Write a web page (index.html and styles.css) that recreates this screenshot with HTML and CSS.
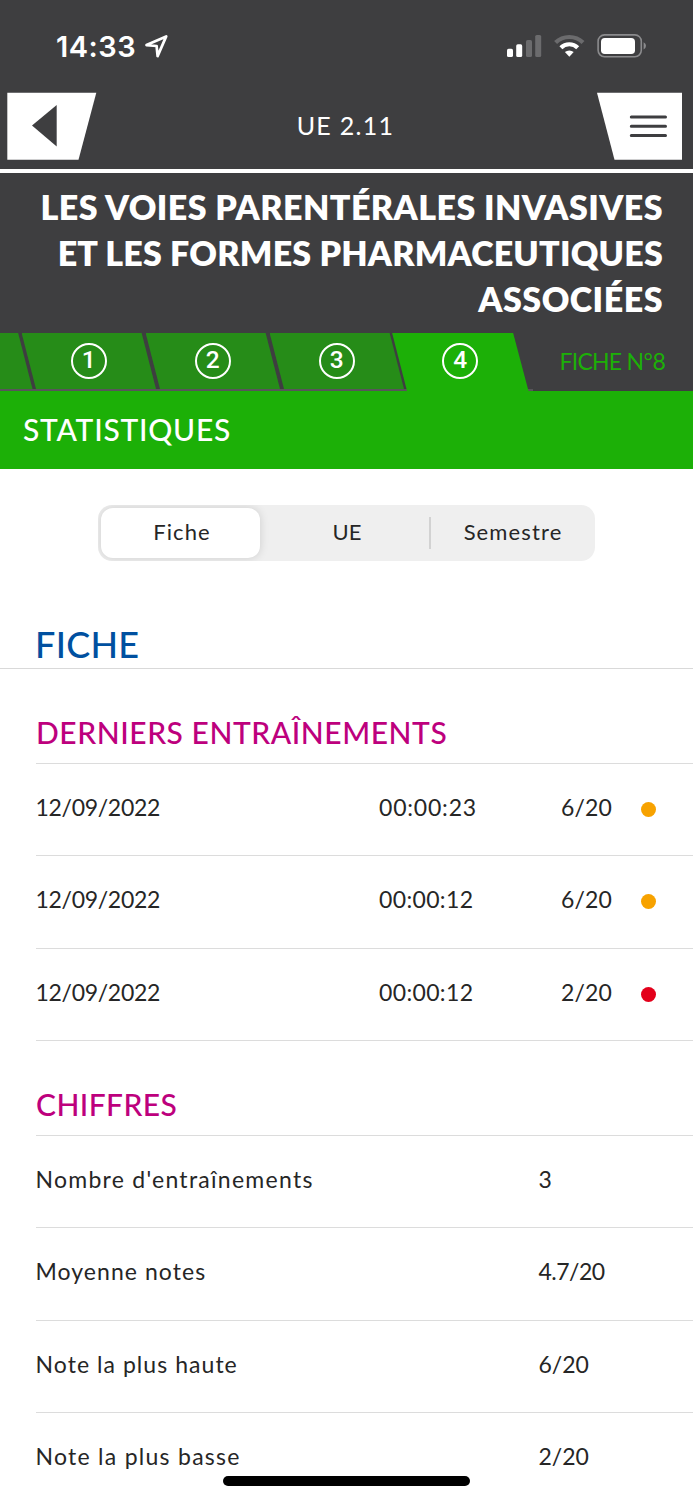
FILE: index.html
```html
<!DOCTYPE html>
<html lang="fr">
<head>
<meta charset="utf-8">
<title>Statistiques</title>
<link rel="stylesheet" href="styles.css">
</head>
<body>
<div class="screen">
  <header class="header">
    <div class="status">
      <span class="clock">14:33</span>
      <svg class="location" width="26" height="26" viewBox="0 0 26 26"><path d="M2.5 13.1 22.2 4.4 13.6 24.1 12.6 14Z" fill="none" stroke="#fff" stroke-width="2.7" stroke-linejoin="round"/></svg>
      <svg class="indicators" width="142" height="28" viewBox="0 0 142 28">
        <g fill="#fff"><rect x="1" y="16.7" width="6" height="8.3" rx="1.6"/><rect x="10.2" y="12.3" width="6" height="12.7" rx="1.6"/></g>
        <g fill="#6b6b6d"><rect x="20" y="8" width="6" height="17" rx="1.6"/><rect x="29.2" y="3" width="6" height="22" rx="1.6"/></g>
        <path d="M49.6 10.6A19.5 19.5 0 0 1 77 10.6" fill="none" stroke="#6b6b6d" stroke-width="4.2"/>
        <path d="M54.9 15.7A12 12 0 0 1 71.7 15.7" fill="none" stroke="#fff" stroke-width="4.2"/>
        <path d="M58.9 20A6.8 6.8 0 0 1 67.7 20L63.3 24.8Z" fill="#fff"/>
        <rect x="92.1" y="2.9" width="43.2" height="21.8" rx="6.4" fill="none" stroke="#8b8b8d" stroke-width="1.6"/>
        <rect x="95" y="6" width="34" height="16" rx="3.8" fill="#fff"/>
        <path d="M137.6 10.2Q140 11.2 140 13.8T137.6 17.4Z" fill="#8b8b8d"/>
      </svg>
    </div>
    <nav class="navbar">
      <svg class="back" width="90" height="68" viewBox="0 0 90 68"><path d="M.3.7H89.3L71.5 67.7H.3Z" fill="#fff"/><path d="M49.7 13V54.5L25 33.5Z" fill="#3e3e40"/></svg>
      <span class="course">UE 2.11</span>
      <svg class="menu" width="86" height="68" viewBox="0 0 86 68"><path d="M0 .7H85V67.7H17.5Z" fill="#fff"/><path d="M34.3 25H68.5M34.3 34.3H68.5M34.3 43.6H68.5" stroke="#3e3e40" stroke-width="3" stroke-linecap="round"/></svg>
    </nav>
    <h1 class="title"><span class="line-one">LES VOIES PARENTÉRALES INVASIVES</span><span class="line-two">ET LES FORMES PHARMACEUTIQUES</span><span>ASSOCIÉES</span></h1>
    <div class="tabs">
      <span class="tab-start"></span>
      <span class="tab"><b class="number">1</b></span>
      <span class="tab"><b class="number">2</b></span>
      <span class="tab"><b class="number">3</b></span>
      <span class="tab active"><b class="number">4</b></span>
      <span class="sheet">FICHE N<span class="degree">°</span>8</span>
    </div>
  </header>
  <h2 class="banner">STATISTIQUES</h2>
  <main>
    <div class="segments">
      <span class="segment selected">Fiche</span>
      <span class="segment unit">UE</span>
      <span class="segment last">Semestre</span>
    </div>
    <h2 class="section">FICHE</h2>
    <h3 class="group">DERNIERS ENTRAÎNEMENTS</h3>
    <div class="row"><span class="date">12/09/2022</span><span class="time">00:00:23</span><span class="score">6/20</span><i class="dot"></i></div>
    <div class="row"><span class="date">12/09/2022</span><span class="time early">00:00:12</span><span class="score">6/20</span><i class="dot"></i></div>
    <div class="row"><span class="date">12/09/2022</span><span class="time early">00:00:12</span><span class="score">2/20</span><i class="dot red"></i></div>
    <h3 class="group figures">CHIFFRES</h3>
    <div class="row"><span class="label">Nombre d'entraînements</span><span class="value">3</span></div>
    <div class="row"><span class="label compact">Moyenne notes</span><span class="value average">4.7/20</span></div>
    <div class="row"><span class="label compact">Note la plus haute</span><span class="value">6/20</span></div>
    <div class="row"><span class="label">Note la plus basse</span><span class="value">2/20</span></div>
  </main>
  <div class="home-indicator"></div>
</div>
</body>
</html>
```
FILE: styles.css
```css
* { box-sizing: border-box; }
body { margin: 0; background: #fff; }
h1, h2, h3 { margin: 0; }
.screen {
  position: relative;
  width: 693px;
  height: 1500px;
  overflow: hidden;
  font-family: Lato, sans-serif;
  color: #262626;
}
svg { display: block; }

.header { height: 391px; background: #3e3e40; color: #fff; }
.status { display: flex; height: 92px; padding: 32px 45px 0 56px; align-items: flex-start; }
.clock { width: 86px; font: 600 29px/29px Inter, sans-serif; letter-spacing: .5px; }
.location { margin-left: 1.5px; }
.indicators { margin-left: auto; }
.navbar {
  display: flex;
  height: 81px;
  padding: 0 10px 0 7px;
  justify-content: space-between;
  border-bottom: 4px solid #fff;
}
.course { padding: 18px 3px 0 0; font-size: 25px; line-height: 30px; letter-spacing: 1.3px; }
.title {
  display: flex;
  height: 159.5px;
  padding: 11px 30px 0 0;
  flex-direction: column;
  align-items: flex-end;
  font-size: 34px;
  font-weight: 800;
  line-height: 46px;
  letter-spacing: .5px;
}
.line-one { letter-spacing: .43px; }
.line-two { letter-spacing: .2px; }
.tabs {
  display: flex;
  height: 58.5px;
  background: linear-gradient(#58555a, #58555a) 0 100% / 533px 2px no-repeat;
}
.tab-start {
  width: 32.5px;
  height: 56.5px;
  margin-right: -11px;
  background: #268c18;
  clip-path: polygon(0 0, 18px 0, 100% 100%, 0 100%);
}
.tab {
  display: flex;
  width: 134.5px;
  height: 56.5px;
  margin-right: -10.5px;
  padding-top: 10.5px;
  justify-content: center;
  background: #268c18;
  clip-path: polygon(0 0, 120px 0, 100% 100%, 14.5px 100%);
}
.tab.active {
  width: 136.5px;
  height: 58.5px;
  margin: 0 0 0 -1.5px;
  background: #1cb007;
  clip-path: polygon(0 0, 121px 0, 100% 100%, 15px 100%);
}
.number {
  width: 36px;
  height: 36px;
  border: 2px solid #fff;
  border-radius: 50%;
  font: 500 24.5px/30px Roboto, sans-serif;
  text-align: center;
}
.sheet { padding: 14px 0 0 31px; color: #1cb007; font-size: 23px; line-height: 28px; letter-spacing: -.75px; white-space: nowrap; }
.degree { font-family: "Open Sans", sans-serif; font-size: 23px; }
.banner {
  height: 78px;
  padding: 20px 0 0 23px;
  background: #1cb007;
  color: #fff;
  font-size: 30px;
  font-weight: 500;
  line-height: 36px;
  letter-spacing: .75px;
}

.segments {
  display: flex;
  width: 497px;
  height: 56px;
  margin: 36px 0 0 98px;
  padding: 3px 0 3px 3px;
  overflow: hidden;
  border-radius: 14px;
  background: #efefef;
}
.segment { flex: 1; padding: 11px 0 0; font-size: 22px; line-height: 26px; letter-spacing: 1.12px; text-align: center; }
.selected { flex: 0 0 159px; padding-left: 3px; border-radius: 12px; background: #fff; box-shadow: 0 0 10px rgba(0, 0, 0, .14); }
.unit { flex: 0 0 171px; padding-left: 3px; letter-spacing: 0; background: linear-gradient(#d2d2d2, #d2d2d2) 100% 9px / 2px 32px no-repeat; }

.section {
  height: 108px;
  padding: 61px 0 0 35px;
  border-bottom: 1px solid #d9d9d9;
  color: #0050a0;
  font-size: 36px;
  font-weight: 500;
  line-height: 44px;
  letter-spacing: .3px;
}
.group {
  height: 95px;
  margin-left: 36px;
  padding-top: 44px;
  border-bottom: 1px solid #dcdcdc;
  color: #bd007d;
  font-size: 30px;
  font-weight: 500;
  line-height: 38px;
  letter-spacing: .55px;
}
.figures { letter-spacing: .4px; height: 94.6px; }
.row {
  display: flex;
  height: 92.4px;
  margin-left: 36px;
  padding-top: 29px;
  border-bottom: 1px solid #dcdcdc;
  font-size: 23px;
  line-height: 28px;
}
.date { width: 343px; letter-spacing: -.3px; text-indent: -.5px; }
.time { width: 182px; letter-spacing: .8px; }
.early { letter-spacing: .35px; }
.score { width: 81px; letter-spacing: .15px; }
.dot { width: 15px; height: 15px; margin-top: 9px; margin-left: -1px; border-radius: 50%; background: #f7a200; }
.dot.red { background: #e3001b; }
.label { width: 502.5px; letter-spacing: 1.27px; text-indent: -.5px; }
.compact { letter-spacing: 1.05px; }
.average { letter-spacing: -.5px; }
.home-indicator {
  position: absolute;
  left: 223px;
  top: 1476px;
  width: 247px;
  height: 10px;
  border-radius: 5px;
  background: #000;
}
```
